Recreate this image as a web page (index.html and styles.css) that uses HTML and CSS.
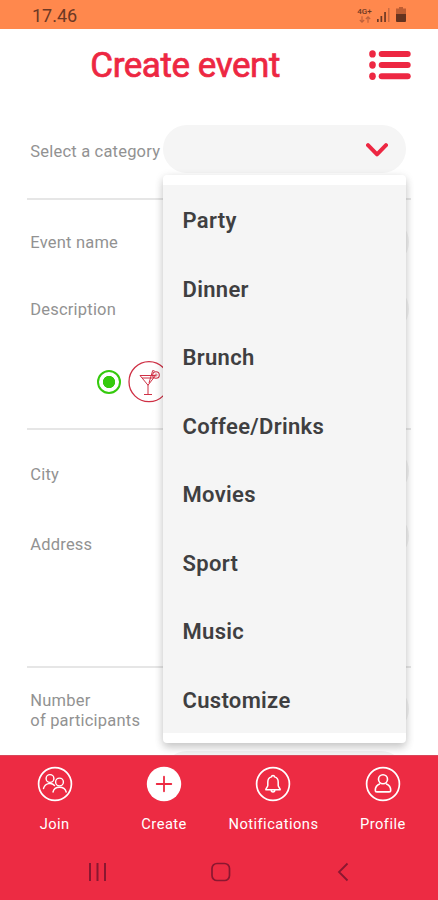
FILE: index.html
```html
<!DOCTYPE html>
<html lang="en">
<head>
<meta charset="utf-8">
<title>Create event</title>
<link rel="stylesheet" href="styles.css">
</head>
<body>
<div class="app">
  <header class="status">
    <span class="clock">17.46</span>
    <div class="status-icons">
      <div class="network"><span>4G+</span>
        <svg width="12" height="7" viewBox="0 0 12 7" fill="none" stroke="#bd603b" stroke-width="1.1"><path d="M3 .3v5.8M.8 4 3 6.2 5.2 4M9 6.8V.9M6.8 3 9 .8 11.200 3"/></svg>
      </div>
      <svg class="signal" width="13" height="14" viewBox="0 0 13 14" fill="#6d3824"><path d="M0 11h1.700v3H0zM3.500 8h1.700v6H3.500zM7.200 4h1.700v10H7.200z"/><path fill="#cc6c43" d="M11 0h1.500v14H11z"/></svg>
      <svg class="battery" width="10" height="15" viewBox="0 0 10 15"><path fill="#bd5d32" d="M3 0h4v1.500h3V8H0V1.500h3z"/><path fill="#65331f" d="M0 7h10v7q0 1-1 1H1q-1 0-1-1z"/></svg>
    </div>
  </header>

  <main class="page">
    <div class="title-bar">
      <h1>Create event</h1>
      <svg class="menu" width="42" height="30" viewBox="0 0 42 30" fill="#ed2742"><ellipse cx="3.500" cy="3.900" rx="3.300" ry="3.700"/><ellipse cx="3.500" cy="15" rx="3.300" ry="3.700"/><ellipse cx="3.500" cy="26.200" rx="3.300" ry="3.700"/><rect x="9.700" y=".9" width="32" height="6" rx="3"/><rect x="9.700" y="12" width="32" height="6" rx="3"/><rect x="9.700" y="23.200" width="32" height="6" rx="3"/></svg>
    </div>

    <section class="group group-category">
      <div class="row">
        <span class="label">Select a category</span>
        <div class="select">
          <svg width="22" height="14" viewBox="0 0 22 14" fill="none" stroke="#ed2742" stroke-width="4" stroke-linecap="round" stroke-linejoin="round"><path d="M2 2.200 11 11.400 20 2.200"/></svg>
          <ul class="dropdown">
            <li>Party</li><li>Dinner</li><li>Brunch</li><li>Coffee/Drinks</li><li>Movies</li><li>Sport</li><li>Music</li><li>Customize</li>
          </ul>
        </div>
      </div>
    </section>

    <section class="group group-event">
      <div class="row"><span class="label">Event name</span><div class="field"></div></div>
      <div class="row"><span class="label">Description</span><div class="field"></div></div>
      <div class="choice">
        <span class="radio"></span>
        <svg width="42" height="42" viewBox="0 0 42 42" fill="none" stroke="#cf3045"><circle cx="21" cy="20.700" r="20" stroke-width="1.300"/><path stroke-width="1" d="M12 14.500h15.500l-7.500 9.700zM14.100 17h11.300M20 24v9.500M16 33.500h8M21 22l3.700-12.500 2 .6"/><circle cx="28" cy="14" r="3.300" stroke-width="1.100"/><circle cx="28" cy="14" r="1.100" stroke-width=".7"/></svg>
      </div>
    </section>

    <section class="group group-place">
      <div class="row"><span class="label city">City</span><div class="field"></div></div>
      <div class="row"><span class="label address">Address</span><div class="field"></div></div>
    </section>

    <section class="group group-people">
      <div class="row"><span class="label people">Number<br>of participants</span><div class="field"></div></div>
      <div class="row"><span class="label"></span><div class="field field-short"></div></div>
    </section>
  </main>

  <footer class="bottom">
    <nav class="tabs">
      <a class="tab"><svg width="36" height="36" viewBox="0 0 36 36" fill="none" stroke="#fff" stroke-width="1.400" stroke-linecap="round"><circle cx="18" cy="18" r="16.400" stroke-width="1.700"/><circle cx="13" cy="12.500" r="3.900"/><circle cx="22.500" cy="16" r="3.900"/><path d="M6.500 22.500c1.500-5.500 8-6.500 11-3M16 26c1.500-6.300 11.500-6.300 13.200 0"/></svg><span>Join</span></a>
      <a class="tab"><svg width="36" height="36" viewBox="0 0 36 36"><circle cx="18" cy="18" r="17.200" fill="#fff"/><path d="M10.700 18h14.600M18 10.700v14.600" stroke="#ed2b43" stroke-width="1.800" stroke-linecap="round"/></svg><span>Create</span></a>
      <a class="tab"><svg width="36" height="36" viewBox="0 0 36 36" fill="none" stroke="#fff" stroke-width="1.500" stroke-linejoin="round"><circle cx="18" cy="18" r="16.400" stroke-width="1.700"/><path d="M16.500 10.900c0-2 3-2 3 0 2.400.7 3.700 2.600 3.700 5v3.700c0 1.600 2 2.200 2 4.200H10.800c0-2 2-2.600 2-4.200v-3.700c0-2.400 1.300-4.300 3.700-5zM16.200 24c0 2.500 3.600 2.500 3.600 0"/></svg><span>Notifications</span></a>
      <a class="tab"><svg width="36" height="36" viewBox="0 0 36 36" fill="none" stroke="#fff" stroke-width="1.600"><circle cx="18" cy="18" r="16.400" stroke-width="1.700"/><circle cx="18" cy="13.200" r="4.500"/><path d="M15 17.700c-3.100 1.200-4.700 3.600-4.700 6.500 0 1.100.6 1.700 1.700 1.700h12c1.100 0 1.700-.6 1.700-1.700 0-2.900-1.600-5.300-4.700-6.500"/></svg><span>Profile</span></a>
    </nav>
    <div class="system">
      <svg width="20" height="20" viewBox="0 0 20 20" stroke="#8b1730" stroke-width="2"><path d="M2 1v18M9.500 1v18M17 1v18"/></svg>
      <svg width="20" height="20" viewBox="0 0 20 20" fill="none" stroke="#8b1730" stroke-width="1.700"><rect x="1" y="1.500" width="17.500" height="17" rx="5"/></svg>
      <svg width="20" height="20" viewBox="0 0 20 20" fill="none" stroke="#8b1730" stroke-width="1.800"><path d="M14.500 1.500 6 10l8.500 8.500"/></svg>
    </div>
  </footer>
</div>
</body>
</html>
```
FILE: styles.css
```css
* { box-sizing: border-box; }

body {
  margin: 0;
  background: #fff;
  font-family: Roboto, "Liberation Sans", sans-serif;
}

svg { display: block; flex: none; }

.app {
  width: 438px;
  height: 900px;
  display: flex;
  flex-direction: column;
  overflow: hidden;
}

.status {
  height: 29px;
  flex: none;
  display: flex;
  justify-content: space-between;
  padding: 0 32px;
  background: #ff884d;
  color: #6d3824;
}

.clock { font-size: 18px; line-height: 31px; letter-spacing: 0; }

.status-icons { display: flex; align-items: flex-start; padding-top: 8px; }

.network {
  width: 15px;
  margin-right: 5px;
  display: flex;
  flex-direction: column;
  align-items: center;
  font-size: 8px;
  font-weight: 500;
  line-height: 8px;
}

.signal { margin-right: 6px; }
.battery { margin-top: -1px; }

.page { height: 726px; flex: none; padding: 0 27px; overflow: hidden; }

.title-bar {
  height: 96px;
  display: flex;
  justify-content: space-between;
  align-items: flex-start;
  padding-left: 63.3px;
}

h1 {
  margin: 0;
  color: #ed2742;
  font-size: 35px;
  font-weight: 400;
  line-height: 74px;
  letter-spacing: -.45px;
  -webkit-text-stroke: .7px #ed2742;
  white-space: nowrap;
}

.menu { margin-top: 21px; }

.group { border-bottom: 2px solid #e6e6e6; }
.group-category { height: 75px; }
.group-event { height: 230px; padding-top: 18px; }
.group-place { height: 238px; padding-top: 17px; }
.group-people { height: 160px; padding-top: 16px; border: 0; }

.row { display: flex; align-items: center; height: 48px; padding-left: 3px; }
.group-event .row + .row { margin-top: 19px; }
.group-place .row + .row { margin-top: 17px; }
.group-people .row { height: 49px; }
.group-people .row + .row { margin-top: 17px; }

.label {
  width: 133px;
  flex: none;
  padding: 2px 0 0 .3px;
  color: #929292;
  font-size: 16.5px;
  line-height: 20px;
  letter-spacing: .2px;
  white-space: nowrap;
}

.group-category .label { padding-top: 6px; }
.label.city { padding-top: 8px; }
.label.address { padding-top: 17px; }
.label.people { padding-top: 5px; }

.field, .select { height: 48px; border-radius: 24px; background: #f5f5f5; }
.field { width: 246px; flex: none; background: #f2f2f2; }
.field-short { width: 242px; }

.select {
  position: relative;
  width: 243px;
  display: flex;
  justify-content: flex-end;
  padding: 18px 18.5px 0 0;
}

.dropdown {
  position: absolute;
  top: 50px;
  left: 0;
  z-index: 1;
  width: 243px;
  height: 568px;
  margin: 0;
  padding: 0;
  border: solid #fff;
  border-width: 10px 0;
  border-radius: 4px;
  background: #f5f5f5;
  box-shadow: 0 5px 8px rgba(0, 0, 0, .14), 0 2px 10px rgba(0, 0, 0, .12);
  list-style: none;
}

.dropdown li {
  height: 68.5px;
  padding-left: 19.5px;
  color: #3f3f41;
  font-size: 22px;
  font-weight: 600;
  line-height: 71px;
  letter-spacing: .32px;
}

.choice { display: flex; align-items: center; gap: 7px; margin: 28px 0 0 70px; }

.radio {
  width: 24px;
  height: 24px;
  border: 2.5px solid #35ca0d;
  border-radius: 50%;
  background: radial-gradient(circle, #35ca0d 5.8px, #fff 6.5px);
}

.bottom { height: 145px; flex: none; background: #ed2b43; box-shadow: inset 0 1px #d9475a; }

.tabs { display: grid; grid-template-columns: repeat(4, 109.4px); padding-top: 11px; }

.tab {
  display: flex;
  flex-direction: column;
  align-items: center;
  color: #fff;
  font-size: 14.7px;
  line-height: 20px;
  letter-spacing: .45px;
}

.tab span { margin-top: 12px; }

.system { display: flex; justify-content: space-between; padding: 28px 85px 0 88px; }
```
